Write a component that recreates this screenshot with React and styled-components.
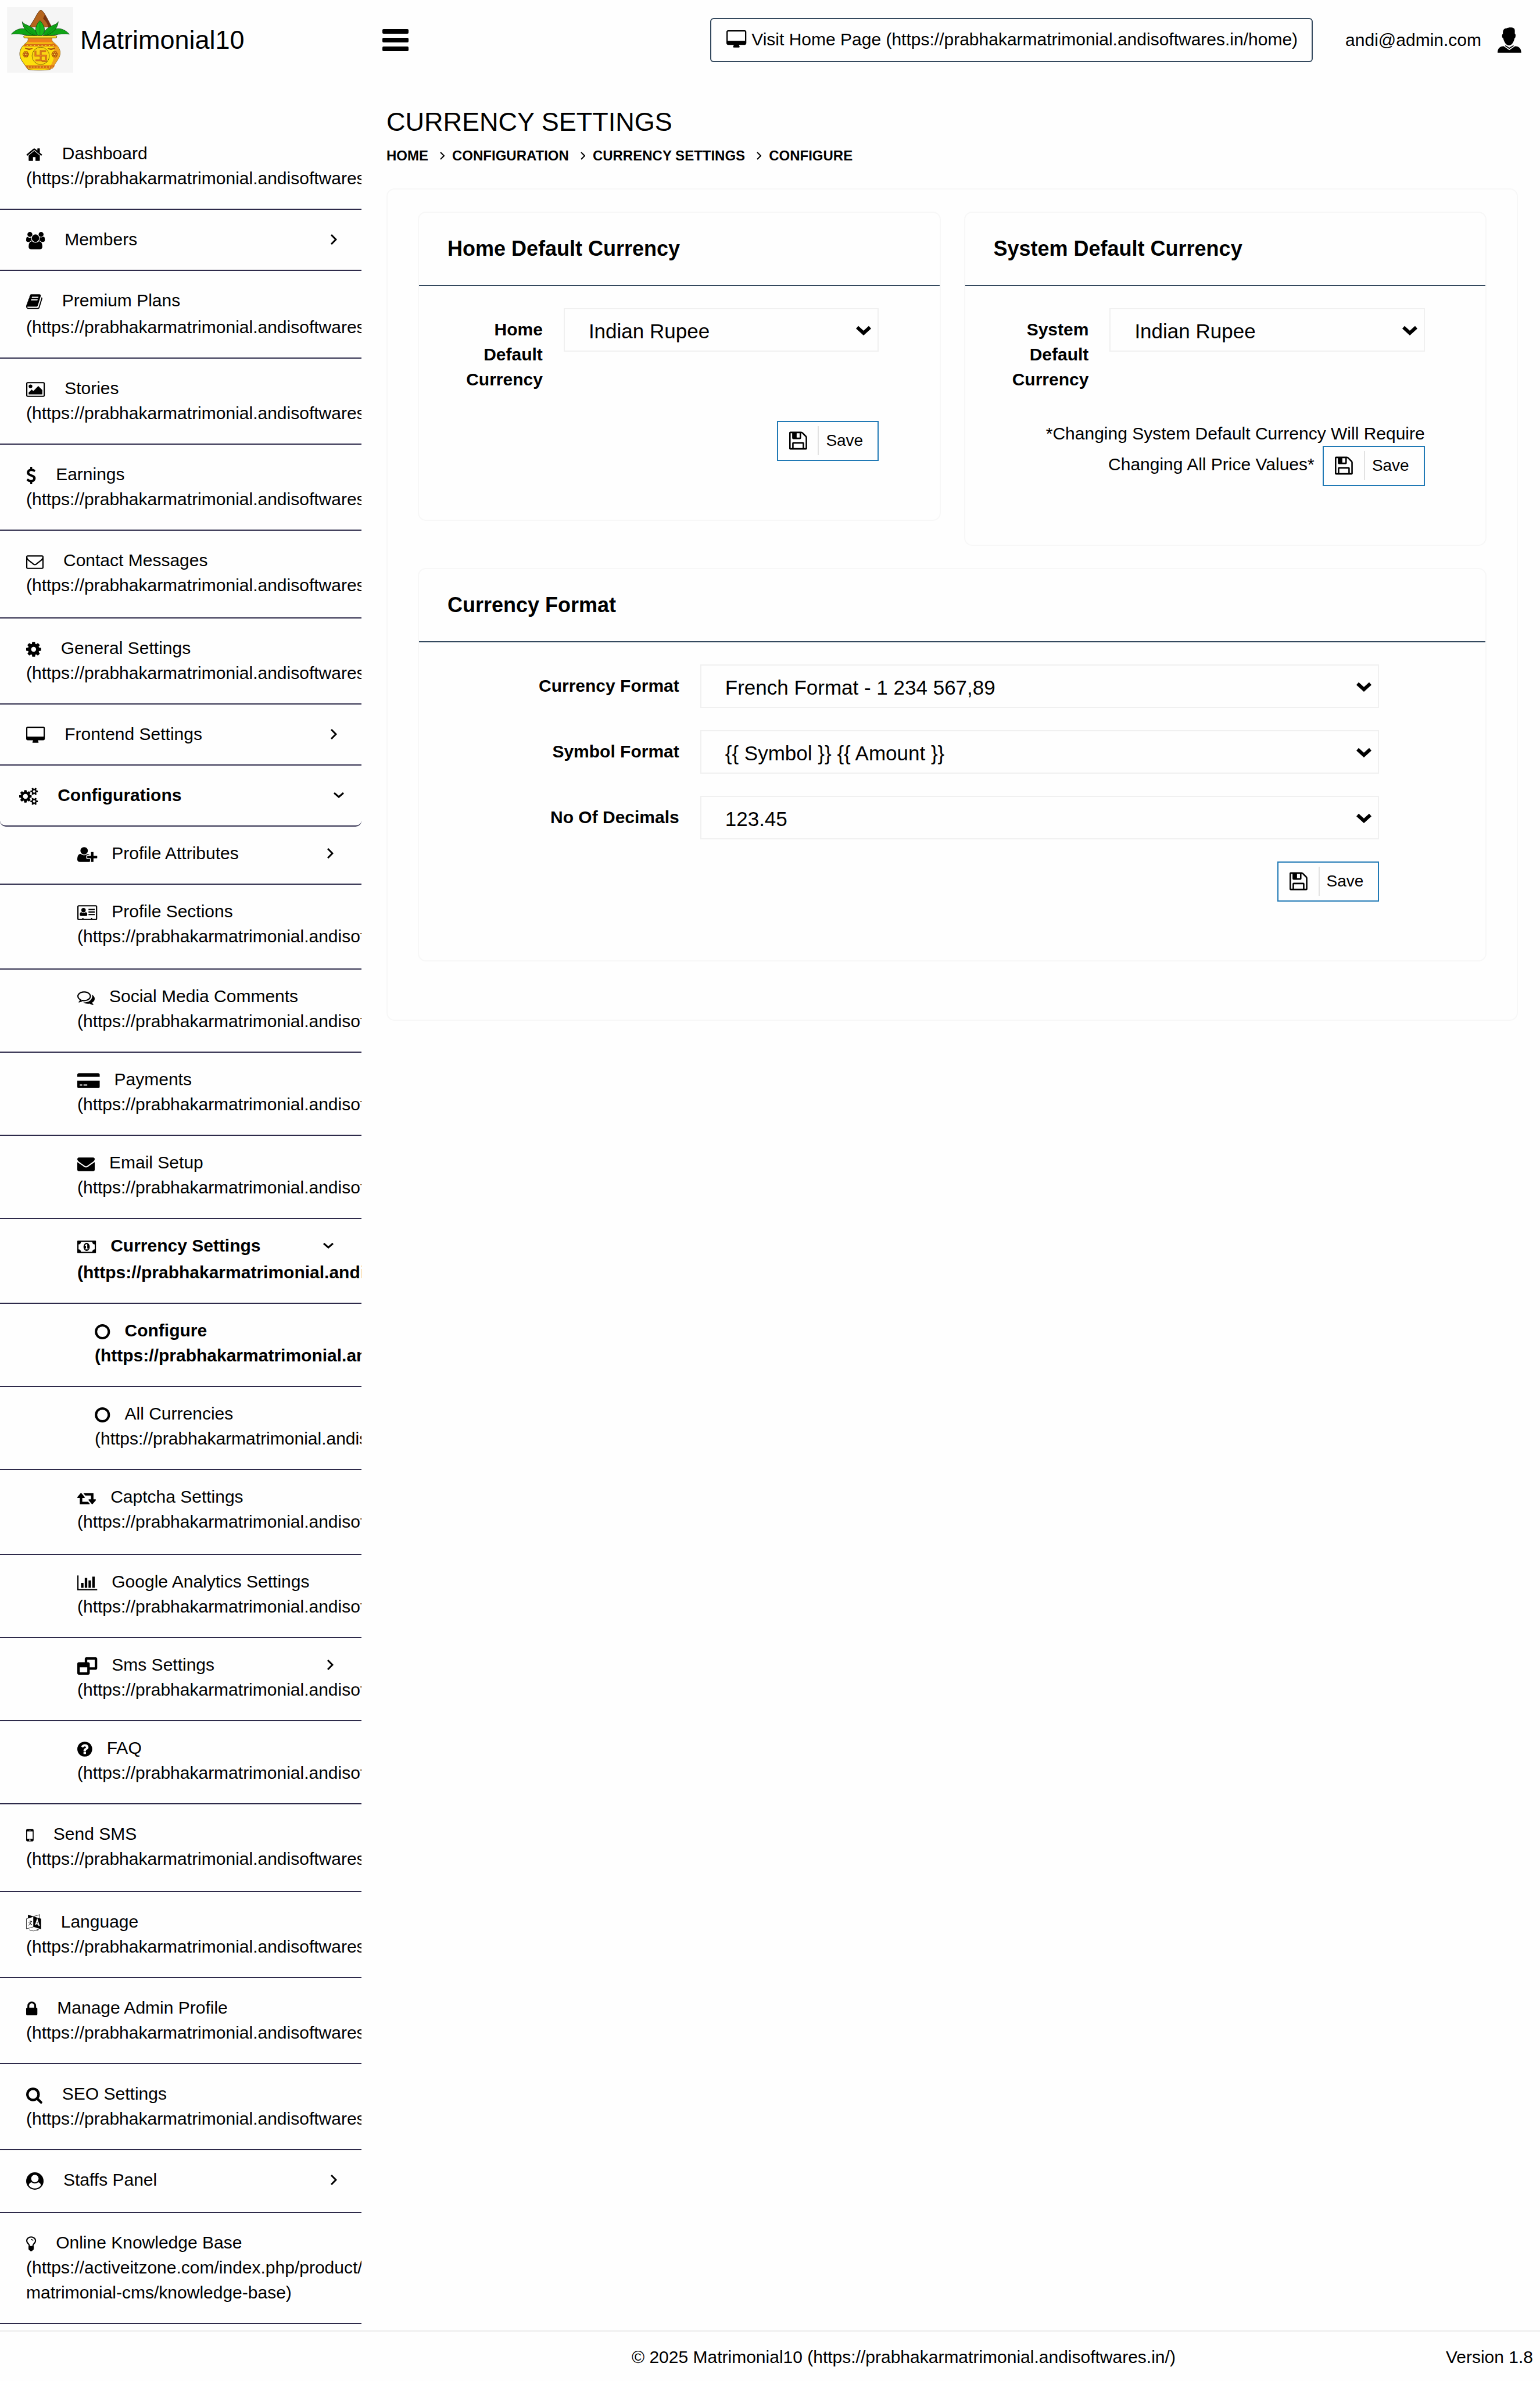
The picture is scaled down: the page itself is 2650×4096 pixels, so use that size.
import React from "react";
import styled, { createGlobalStyle, css } from "styled-components";

const INK = "#000";
const RULE = "#2d2a4a";
const SLATE = "#34495e";
const BLUE = "#2079b5";
const PAPER = "#fefefe";
const SITE = "https://prabhakarmatrimonial.andisoftwares.in/";

const GlobalStyle = createGlobalStyle`
  *, *::before, *::after { box-sizing: border-box; }
  body {
    margin: 0;
    background: ${PAPER};
    color: ${INK};
    font-family: "Liberation Sans", Arial, sans-serif;
    font-size: 30px;
    line-height: 43px;
  }
  a { color: inherit; text-decoration: none; }
`;

/* ---------- icons: [x offset, width, shapes], all 1792 units high ---------- */

const ICONS = {
  home: [64, 1664, <path d="M1472 992v480q0 26-19 45t-45 19h-384v-384h-256v384h-384q-26 0-45-19t-19-45v-480q0-1 .5-3t.5-3l575-474 575 474q1 2 1 6zm223-69l-62 74q-8 9-21 11h-3q-13 0-21-7l-692-577-692 577q-12 8-24 7-13-2-21-11l-62-74q-8-10-7-23.5t11-21.5l719-599q32-26 76-26t76 26l244 204v-195q0-14 9-23t23-9h192q14 0 23 9t9 23v408l219 182q10 8 11 21.5t-7 23.5z" />],
  users: [0, 1920, <path d="M593 896q-162 5-265 128h-134q-82 0-138-40.5t-56-118.5q0-353 124-353 6 0 43.5 21t97.5 42.5 119 21.5q67 0 133-23-5 37-5 66 0 159 81 288zm1071 637q0 120-73 189.5t-194 69.5h-874q-121 0-194-69.5t-73-189.5q0-53 3.5-103.5t14-109 26.5-108.5 43-97.5 62-81 85.5-53.5 111.5-20q10 0 43 21.5t73 48 107 48 135 21.5 135-21.5 107-48 73-48 43-21.5q61 0 111.5 20t85.5 53.5 62 81 43 97.5 26.5 108.5 14 109 3.5 103.5zm-1024-1277q0 106-75 181t-181 75-181-75-75-181 75-181 181-75 181 75 75 181zm704 384q0 159-112.5 271.5t-271.5 112.5-271.5-112.5-112.5-271.5 112.5-271.5 271.5-112.5 271.5 112.5 112.5 271.5zm576 225q0 78-56 118.5t-138 40.5h-134q-103-123-265-128 81-129 81-288 0-29-5-66 66 23 133 23 59 0 119-21.5t97.5-42.5 43.5-21q124 0 124 353zm-128-609q0 106-75 181t-181 75-181-75-75-181 75-181 181-75 181 75 75 181z" />],
  book: [64, 1664, <path d="M1703 478q40 57 18 129l-275 906q-19 64-76.5 107.5t-122.5 43.5h-923q-77 0-148.5-53.5t-99.5-131.5q-24-67-2-127 0-4 3-27t4-37q1-8-3-21.5t-3-19.5q2-11 8-21t16.5-23.5 16.5-23.5q23-38 45-91.5t30-91.5q3-10 .5-30t-.5-28q3-11 17-28t17-23q21-36 42-92t25-90q1-9-2.5-32t.5-28q4-13 22-30.5t22-22.5q19-26 42.5-84.5t27.5-96.5q1-8-3-25.5t-2-26.5q2-8 9-18t18-23 17-21q8-12 16.5-30.5t15-35 16-36 19.5-32 26.5-23.5 36-11.5 47.5 5.5l-1 3q38-9 51-9h761q74 0 114 56t18 130l-274 906q-36 119-71.5 153.5t-128.5 34.5h-869q-27 0-38 15-11 16-1 43 24 70 144 70h923q29 0 56-15.5t35-41.5l300-987q7-22 5-57 38 15 59 43zm-1064 2q-4 13 2 22.5t20 9.5h608q13 0 25.5-9.5t16.5-22.5l21-64q4-13-2-22.5t-20-9.5h-608q-13 0-25.5 9.5t-16.5 22.5zm-83 256q-4 13 2 22.5t20 9.5h608q13 0 25.5-9.5t16.5-22.5l21-64q4-13-2-22.5t-20-9.5h-608q-13 0-25.5 9.5t-16.5 22.5z" />],
  picture: [-64, 1920, <path d="M576 576q0 80-56 136t-136 56-136-56-56-136 56-136 136-56 136 56 56 136zm1024 384v448h-1408v-192l320-320 160 160 512-512zm96-704h-1600q-13 0-22.5 9.5t-9.5 22.5v1216q0 13 9.5 22.5t22.5 9.5h1600q13 0 22.5-9.5t9.5-22.5v-1216q0-13-9.5-22.5t-22.5-9.5zm160 32v1216q0 66-47 113t-113 47h-1600q-66 0-113-47t-47-113v-1216q0-66 47-113t113-47h1600q66 0 113 47t47 113z" />],
  dollar: [384, 1024, <path d="M1362 1185q0 153-99.5 263.5t-258.5 136.5v175q0 14-9 23t-23 9h-135q-13 0-22.5-9.5t-9.5-22.5v-175q-66-9-127.5-31t-101.5-44.5-74-48-46.5-37.5-17.5-18q-17-21-2-41l103-135q7-10 23-12 15-2 24 9l2 2q113 99 243 125 37 8 74 8 81 0 142.5-43t61.5-122q0-28-15-53t-33.5-42-58.5-37.5-66-32-80-32.5q-39-16-61.5-25t-61.5-26.5-62.5-31-56.5-35.5-53.5-42.5-43.5-49-35.5-58-21-66.5-8.5-78q0-138 98-242t255-134v-180q0-13 9.5-22.5t22.5-9.5h135q14 0 23 9t9 23v176q57 6 110.5 23t87 33.5 63.5 37.5 39 29 15 14q17 18 5 38l-81 146q-8 15-23 16-14 3-27-7-3-3-14.5-12t-39-26.5-58.5-32-74.5-26-85.5-11.5q-95 0-155 43t-60 111q0 26 8.5 48t29.5 41.5 39.5 33 56 31 60.5 27 70 27.5q53 20 81 31.5t76 35 75.5 42.5 62 50 53 63.5 31.5 76.5 13 94z" />],
  mailOutline: [0, 1792, <path d="M1664 1504v-768q-32 36-69 66-268 206-426 338-51 43-83 67t-86.5 48.5-102.5 24.5h-2q-48 0-102.5-24.5t-86.5-48.5-83-67q-158-132-426-338-37-30-69-66v768q0 13 9.5 22.5t22.5 9.5h1472q13 0 22.5-9.5t9.5-22.5zm0-1051v-24.5l-.5-13-3-12.5-5.5-9-9-7.5-14-2.5h-1472q-13 0-22.5 9.5t-9.5 22.5q0 168 147 284 193 152 401 317 6 5 35 29.5t46 37.5 44.5 31.5 50.5 27.5 43 9h2q20 0 43-9t50.5-27.5 44.5-31.5 46-37.5 35-29.5q208-165 401-317 54-43 100.5-115.5t46.5-131.5zm128-37v1088q0 66-47 113t-113 47h-1472q-66 0-113-47t-47-113v-1088q0-66 47-113t113-47h1472q66 0 113 47t47 113z" />],
  gear: [128, 1536, <path d="M1152 896q0-106-75-181t-181-75-181 75-75 181 75 181 181 75 181-75 75-181zm512-109v222q0 12-8 23t-20 13l-185 28q-19 54-39 91 35 50 107 138 10 12 10 25t-9 23q-27 37-99 108t-94 71q-12 0-26-9l-138-108q-44 23-91 38-16 136-29 186-7 28-36 28h-222q-14 0-24.5-8.5t-11.5-21.5l-28-184q-49-16-90-37l-141 107q-10 9-25 9-14 0-25-11-126-114-165-168-7-10-7-23 0-12 8-23 15-21 51-66.5t54-70.5q-27-50-41-99l-183-27q-13-2-21-12.5t-8-23.5v-222q0-12 8-23t19-13l186-28q14-46 39-92-40-57-107-138-10-12-10-24 0-10 9-23 26-36 98.5-107.5t94.5-71.5q13 0 26 10l138 107q44-23 91-38 16-136 29-186 7-28 36-28h222q14 0 24.5 8.5t11.5 21.5l28 184q49 16 90 37l142-107q9-9 24-9 13 0 25 10 129 119 165 170 7 8 7 22 0 12-8 23-15 21-51 66.5t-54 70.5q26 50 41 98l183 28q13 2 21 12.5t8 23.5z" />],
  desktop: [-64, 1920, <path d="M1728 992v-832q0-13-9.5-22.5t-22.5-9.5h-1600q-13 0-22.5 9.5t-9.5 22.5v832q0 13 9.5 22.5t22.5 9.5h1600q13 0 22.5-9.5t9.5-22.5zm128-832v1088q0 66-47 113t-113 47h-544q0 37 16 77.5t32 71 16 43.5q0 26-19 45t-45 19h-512q-26 0-45-19t-19-45q0-14 16-44t32-70 16-78h-544q-66 0-113-47t-47-113v-1088q0-66 47-113t113-47h1600q66 0 113 47t47 113z" />],
  gears: [-64, 1920, <path d="M832 896q0-106-75-181t-181-75-181 75-75 181 75 181 181 75 181-75 75-181zm768 512q0-52-38-90t-90-38-90 38-38 90q0 53 37.5 90.5t90.5 37.5 90.5-37.5 37.5-90.5zm0-1024q0-52-38-90t-90-38-90 38-38 90q0 53 37.5 90.5t90.5 37.5 90.5-37.5 37.5-90.5zm-384 421v185q0 10-7 19.5t-16 10.5l-155 24q-11 35-32 76 34 48 90 115 7 11 7 20 0 12-7 19-23 30-82.5 89.5t-78.5 59.5q-11 0-21-7l-115-90q-37 19-77 31-11 108-23 155-7 24-30 24h-186q-11 0-20-7.5t-10-17.5l-23-153q-34-10-75-31l-118 89q-7 7-20 7-11 0-21-8-144-133-144-160 0-9 7-19 10-14 41-53t47-61q-23-44-35-82l-152-24q-10-1-17-9.5t-7-19.5v-185q0-10 7-19.5t16-10.5l155-24q11-35 32-76-34-48-90-115-7-11-7-20 0-12 7-20 22-30 82-89t79-59q11 0 21 7l115 90q34-18 77-32 11-108 23-154 7-24 30-24h186q11 0 20 7.5t10 17.5l23 153q34 10 75 31l118-89q8-7 20-7 11 0 21 8 144 133 144 160 0 8-7 19-12 16-42 54t-45 60q23 48 34 82l152 23q10 2 17 10.5t7 19.5zm640 533v140q0 16-149 31-12 27-30 52 51 113 51 138 0 4-4 7-122 71-124 71-8 0-46-47t-52-68q-20 2-30 2t-30-2q-14 21-52 68t-46 47q-2 0-124-71-4-3-4-7 0-25 51-138-18-25-30-52-149-15-149-31v-140q0-16 149-31 13-29 30-52-51-113-51-138 0-4 4-7 4-2 35-20t59-34 30-16q8 0 46 46.5t52 67.5q20-2 30-2t30 2q51-71 92-112l6-2q4 0 124 70 4 3 4 7 0 25-51 138 17 23 30 52 149 15 149 31zm0-1024v140q0 16-149 31-12 27-30 52 51 113 51 138 0 4-4 7-122 71-124 71-8 0-46-47t-52-68q-20 2-30 2t-30-2q-14 21-52 68t-46 47q-2 0-124-71-4-3-4-7 0-25 51-138-18-25-30-52-149-15-149-31v-140q0-16 149-31 13-29 30-52-51-113-51-138 0-4 4-7 4-2 35-20t59-34 30-16q8 0 46 46.5t52 67.5q20-2 30-2t30 2q51-71 92-112l6-2q4 0 124 70 4 3 4 7 0 25-51 138 17 23 30 52 149 15 149 31z" />],
  userPlus: [0, 2048, <path d="M704 896q-159 0-271.5-112.5T320 512t112.5-271.5T704 128t271.5 112.5T1088 512 975.5 783.500 704 896zm960 128h352q13 0 22.500 9.500t9.500 22.500v192q0 13-9.500 22.500t-22.500 9.500h-352v352q0 13-9.500 22.500t-22.500 9.500h-192q-13 0-22.500-9.500t-9.500-22.500v-352h-352q-13 0-22.500-9.500t-9.500-22.500v-192q0-13 9.500-22.500t22.500-9.500h352v-352q0-13 9.500-22.500t22.500-9.500h192q13 0 22.500 9.500t9.500 22.500v352zm-736 224q0 52 38 90t90 38h256v238q-68 50-171 50h-874q-121 0-194-69t-73-190q0-53 3.500-103.500t14-109 26.500-108.500 43-97.500 62-81 85.500-53.500 111.500-20q19 0 39 17 79 61 154.500 91.500t164.500 30.500 164.500-30.500 154.500-91.500q20-17 39-17 132 0 217 96h-223q-52 0-90 38t-38 90v192z" />],
  idCard: [0, 2048, <><path fillRule="evenodd" d="M160 128h1728q160 0 160 160v1216q0 160-160 160H160q-160 0-160-160V288q0-160 160-160zm-32 160v1216q0 32 32 32h352v-64q0-32 32-32h64q32 0 32 32v64h768v-64q0-32 32-32h64q32 0 32 32v64h352q32 0 32-32V288q0-32-32-32H160q-32 0-32 32z" /><circle cx="640" cy="640" r="225" /><path d="M256 1090c0-160 60-240 170-240 120 100 310 100 430 0 110 0 170 80 170 240 0 110-60 150-130 150H390c-80 0-134-50-134-150zM1152 1024h640v128h-640zM1152 768h640v128h-640zM1152 512h640v128h-640z" /></>],
  comments: [0, 1792, <path d="M704 384q-153 0-286 52t-211.5 141-78.5 191q0 82 53 158t149 132l97 56-35 84q34-20 62-39l44-31 53 10q78 14 153 14 153 0 286-52t211.500-141 78.500-191-78.500-191-211.500-141-286-52zm0-128q191 0 353.500 68.500t256.500 186.500 94 257-94 257-256.500 186.500-353.500 68.500q-86 0-176-16-124 88-278 128-36 9-86 16h-3q-11 0-20.500-8t-11.500-21q-1-3-1-6.500t.5-6.500 2-6l2.500-5 3.500-5.500 4-5 4.500-5 4-4.500q5-6 23-25t26-29.500 22.500-29 25-38.500 20.500-44q-124-72-195-177t-71-224q0-139 94-257t256.500-186.500 353.500-68.500zm822 1169q10 24 20.500 44t25 38.500 22.500 29 26 29.500 23 25q1 1 4 4.500t4.500 5 4 5 3.500 5.500l2.500 5 2 6 .5 6.500-1 6.500q-3 14-13 22t-22 7q-50-7-86-16-154-40-278-128-90 16-176 16-271 0-472-132 58 4 88 4 161 0 309-45t264-129q125-92 192-212t67-254q0-77-23-152 129 71 204 178t75 230q0 120-71 224.500t-195 176.500z" />],
  creditCard: [0, 2304, <path fillRule="evenodd" d="M0 512V288q0-160 160-160h1984q160 0 160 160v224zM0 896h2304v608q0 160-160 160H160q-160 0-160-160zm256 384v128h256v-128zm384 0v128h384v-128z" />],
  mail: [0, 1792, <path d="M1792 710v794q0 66-47 113t-113 47h-1472q-66 0-113-47t-47-113v-794q44 49 101 87 362 246 497 345 57 42 92.500 65.500t94.500 48 110 24.500h2q51 0 110-24.500t94.500-48 92.500-65.500q170-123 498-345 57-39 100-87zm0-294q0 79-49 151t-122 123q-376 261-468 325-10 7-42.500 31t-54 38.500-52 32.500-57.500 27-50 9h-2q-23 0-50-9t-57.500-27-52-32.500-54-38.500-42.500-31q-91-64-262-182.500t-205-142.500q-62-42-117-115.500t-55-136.500q0-78 41.500-130t118.500-52h1472q65 0 112.500 47t47.500 113z" />],
  money: [0, 1920, <path d="M768 1152h384v-96h-128v-448h-114l-148 137 77 80q42-37 55-57h2v288h-128v96zm512-256q0 70-21 142t-59.500 134-101.500 101-138 39-138-39-101.500-101-59.500-134-21-142 21-142 59.500-134 101.500-101 138-39 138 39 101.500 101 59.500 134 21 142zm512 256v-512q-106 0-181-75t-75-181h-1152q0 106-75 181t-181 75v512q106 0 181 75t75 181h1152q0-106 75-181t181-75zm128-832v1152q0 26-19 45t-45 19h-1792q-26 0-45-19t-19-45v-1152q0-26 19-45t45-19h1792q26 0 45 19t19 45z" />],
  circle: [0, 1584, <circle cx="792" cy="896" r="660" fill="none" stroke="currentColor" strokeWidth="240" />],
  retweet: [0, 1920, <path d="M1280 1504q0 13-9.500 22.500t-22.500 9.500h-960q-8 0-13.500-2t-9-7-5.500-8-3-11.500-1-11.500v-600h-192q-26 0-45-19t-19-45q0-24 15-41l320-384q19-22 49-22t49 22l320 384q15 17 15 41 0 26-19 45t-45 19h-192v384h576q16 0 25 11l160 192q7 10 7 21zm640-416q0 24-15 41l-320 384q-20 23-49 23t-49-23l-320-384q-15-17-15-41 0-26 19-45t45-19h192v-384h-576q-16 0-25-12l-160-192q-7-9-7-20 0-13 9.500-22.500t22.500-9.500h960q8 0 13.500 2t9 7 5.500 8 3 11.500 1 11.500v600h192q26 0 45 19t19 45z" />],
  chart: [0, 2048, <path d="M640 896v512h-256v-512h256zm384-512v1024h-256v-1024h256zm1024 1152v128h-2048v-1536h128v1408h1920zm-640-896v768h-256v-768h256zm384-384v1152h-256v-1152h256z" />],
  windows: [0, 2048, <path d="M256 1536h768v-512H256v512zm1024-512h512V256h-768v256h96q66 0 113 47t47 113v352zm768-864v960q0 66-47 113t-113 47h-608v352q0 66-47 113t-113 47H160q-66 0-113-47T0 1632V672q0-66 47-113t113-47h608V160q0-66 47-113T928 0h960q66 0 113 47t47 113z" />],
  question: [128, 1536, <path d="M1024 1376v-192q0-14-9-23t-23-9h-192q-14 0-23 9t-9 23v192q0 14 9 23t23 9h192q14 0 23-9t9-23zm256-672q0-88-55.500-163t-138.500-116-170-41q-243 0-371 213-15 24 8 42l132 100q7 6 19 6 16 0 25-12 53-68 86-92 34-24 86-24 48 0 85.500 26t37.500 59q0 38-20 61t-68 45q-63 28-115.500 86.500t-52.500 125.500v36q0 14 9 23t23 9h192q14 0 23-9t9-23q0-19 21.500-49.500t54.500-49.500q32-18 49-28.500t46-35 44.500-48 28-60.500 12.500-81zm384 192q0 209-103 385.500t-279.500 279.500-385.500 103-385.500-103-279.500-279.500-103-385.500 103-385.500 279.500-279.500 385.500-103 385.500 103 279.500 279.500 103 385.500z" />],
  mobile: [512, 768, <path d="M976 1408q0-33-23.500-56.500t-56.500-23.500-56.500 23.500-23.500 56.500 23.500 56.500 56.500 23.500 56.500-23.500 23.500-56.500zm208-160v-704q0-13-9.500-22.500t-22.500-9.500h-512q-13 0-22.500 9.500t-9.500 22.500v704q0 13 9.500 22.500t22.500 9.500h512q13 0 22.500-9.500t9.500-22.500zm-192-848q0-16-16-16h-160q-16 0-16 16t16 16h160q16 0 16-16zm288-16v1024q0 52-38 90t-90 38h-512q-52 0-90-38t-38-90v-1024q0-52 38-90t90-38h512q52 0 90 38t38 90z" />],
  language: [0, 1536, <g transform="scale(46.5)"><path d="M4 1 16.500 5 4 9.200zM16.300 5 33 10v23l-16.700-5z" /><path d="M.6 10 16.300 5v23L.6 32.400zM16.300 5 30 1v7.800" fill="none" stroke="currentColor" strokeWidth="1" /><path d="M8 13.500l1.800 1.500M5 18l8-2.500M11.500 16q-2 6-6.500 9M7 19.500q3 3 6 3.500" fill="none" stroke="currentColor" strokeWidth="1.200" /><path d="M20.800 23.500 24.500 12.500 28.800 26M22 20.500l5 1.500" fill="none" stroke={PAPER} strokeWidth="2.400" /><path d="M7 34.500q9 5 19-.3M23.500 33.500l4-.5-1.500 3z" fill="none" stroke="currentColor" strokeWidth="1" /></g>],
  lock: [320, 1152, <path d="M640 768h512v-192q0-106-75-181t-181-75-181 75-75 181v192zm832 96v576q0 40-28 68t-68 28h-960q-40 0-68-28t-28-68v-576q0-40 28-68t68-28h32v-192q0-184 132-316t316-132 316 132 132 316v192h32q40 0 68 28t28 68z" />],
  search: [64, 1664, <path d="M1216 832q0-185-131.500-316.500t-316.500-131.500-316.500 131.500-131.500 316.500 131.500 316.500 316.500 131.500 316.500-131.500 131.500-316.500zm512 832q0 52-38 90t-90 38q-54 0-90-38l-343-342q-179 124-399 124-143 0-273.500-55.500t-225-150-150-225-55.500-273.500 55.500-273.500 150-225 225-150 273.500-55.500 273.500 55.500 225 150 150 225 55.500 273.500q0 220-124 399l343 343q37 37 37 90z" />],
  userCircle: [0, 1792, <><circle cx="896" cy="896" r="832" fill="none" stroke="currentColor" strokeWidth="128" /><path fillRule="evenodd" d="M896 64a832 832 0 0 1 650 1350c-50-260-140-390-325-390a490 490 0 0 1-650 0c-185 0-275 130-325 390A832 832 0 0 1 896 64zm0 192a384 384 0 1 0 0 768 384 384 0 1 0 0-768z" /></>],
  bulb: [384, 1024, <path d="M1120 576q0 13-9.500 22.500t-22.500 9.500-22.500-9.500-9.500-22.500q0-46-54-71t-106-25q-13 0-22.500-9.500t-9.500-22.500 9.500-22.500 22.500-9.500q50 0 99.500 16t87 54 37.500 90zm160 0q0-72-34.500-134t-90-101.500-123-62-136.500-22.500-136.500 22.500-123 62-90 101.500-34.500 134q0 101 68 180 10 11 30.500 33t30.500 33q128 153 141 298h228q13-145 141-298 10-11 30.500-33t30.500-33q68-79 68-180zm128 0q0 155-103 268-45 49-74.500 87t-59.500 95.500-34 107.500q47 28 47 82 0 37-25 64 25 27 25 64 0 52-45 81 13 23 13 47 0 46-31.500 71t-77.500 25q-20 44-60 70t-87 26-87-26-60-70q-46 0-77.500-25t-31.500-71q0-24 13-47-45-29-45-81 0-37 25-64-25-27-25-64 0-54 47-82-4-50-34-107.500t-59.500-95.500-74.500-87q-103-113-103-268 0-99 44.500-184.500t117-142 164-89 186.500-32.500 186.500 32.500 164 89 117 142 44.500 184.500z" />],
  floppy: [128, 1536, <path d="M512 1536h768v-384h-768v384zm896 0h128v-896q0-14-10-38.500t-20-34.500l-281-281q-10-10-34-20t-39-10v416q0 40-28 68t-68 28h-576q-40 0-68-28t-28-68v-416h-128v1280h128v-416q0-40 28-68t68-28h832q40 0 68 28t28 68v416zm-384-928v-320q0-13-9.500-22.500t-22.500-9.500h-192q-13 0-22.500 9.500t-9.500 22.500v320q0 13 9.500 22.500t22.500 9.500h192q13 0 22.500-9.500t9.500-22.500zm640 32v928q0 40-28 68t-68 28h-1344q-40 0-68-28t-28-68v-1344q0-40 28-68t68-28h928q40 0 88 20t76 48l280 280q28 28 48 76t20 88z" />],
};

const Glyph = styled.svg`
  display: block;
  flex: none;
  height: ${(p) => p.$size}px;
  fill: currentColor;
  overflow: visible;
`;

function Icon({ name, size = 30 }) {
  const [x, width, shapes] = ICONS[name];
  return (
    <Glyph $size={size} viewBox={`${x} 0 ${width} 1792`} aria-hidden="true">
      {shapes}
    </Glyph>
  );
}

const LogoArt = styled.svg`
  display: block;
  width: 114px;
  height: 113px;
`;

function Logo() {
  const gold = "#f0a11c";
  const beads = (y, xs) => xs.map((x) => <circle key={x} cx={x} cy={y} r="5" fill="#ffe14a" stroke="#b8580c" strokeWidth="2" />);
  const flower = (cx, cy) => (
    <g fill="#f29a1a" stroke="#a34c0a" strokeWidth="4">
      {[0, 60, 120, 180, 240, 300].map((a) => (
        <circle key={a} cx={cx + 12 * Math.cos((a * Math.PI) / 180)} cy={cy + 12 * Math.sin((a * Math.PI) / 180)} r="7" />
      ))}
      <circle cx={cx} cy={cy} r="7" fill="#ffe14a" />
    </g>
  );
  return (
    <LogoArt viewBox="0 0 426 423" role="img" aria-label="Matrimonial10 logo">
      <rect width="426" height="423" fill="#f5f5f5" />
      <path d="M217 20c-14 4-27 35-45 65l-28 44h144c-20-35-52-108-71-109z" fill="#b5651d" stroke="#4a220a" strokeWidth="3" />
      <path d="M232 75c18 15 28 33 34 54h22c-14-22-30-54-44-80z" fill="#7a3510" />
      <g fill="#0fa515" stroke="#0a4a10" strokeWidth="3">
        <path d="M27 175c30-32 66-44 100-30 20 10 42 24 54 42-45 3-80-20-154-12z" />
        <path d="M401 175c-30-32-66-44-100-30-20 10-42 24-54 42 45 3 80-20 154-12z" />
        <path d="M98 95c10 22 62 24 86 60 8 12 10 22 10 32-50-8-92-44-96-92z" />
        <path d="M330 95c-10 22-62 24-86 60-8 12-10 22-10 32 50-8 92-44 96-92z" />
        <path d="M212 88c-20 20-30 44-27 66 2 14 10 26 18 33h18c10-8 18-20 20-34 2-22-9-45-29-65z" fill="#19b81d" />
      </g>
      <path d="M212 96v90M110 112c20 30 50 55 78 72M318 112c-20 30-50 55-78 72" fill="none" stroke="#0a6a10" strokeWidth="2" />
      <path d="M134 201c6 14-4 24-18 36-40 32-42 76-20 110l38 54c6 8 136 8 146 0 20-18 34-42 50-66 22-36 14-70-20-98-14-12-26-22-20-36z" fill="#fddf0c" stroke="#5a3a08" strokeWidth="3" />
      <path d="M258 405c8-1 18-2 22-4 20-18 34-42 50-66 22-36 14-70-20-98l-22-18c24 70 26 130-30 186z" fill={gold} />
      <path d="M134 203h156c-4 10-2 18 6 26H128c8-8 10-16 6-26z" fill="#ee7f1b" />
      <path d="M120 236h184l18 18H104zM116 376h194l-16 20H132z" fill="#d96b16" />
      {beads(249, [130, 154, 178, 202, 226, 250, 274, 298])}
      {beads(387, [138, 156, 174, 194, 214, 234, 254, 274, 290])}
      <rect x="107" y="185" width="214" height="14" rx="7" fill="#ffe22e" stroke="#5a3a08" strokeWidth="3" />
      {flower(121, 305)}
      {flower(307, 305)}
      <path d="M116 266l26 10 22-8-22 2zM310 266l-26 10-22-8 22 2z" fill="#e9871b" stroke="#a34c0a" strokeWidth="4" />
      <circle cx="217" cy="315" r="56" fill="#fbd313" stroke="#6a5208" strokeWidth="3" />
      <path d="M183 282v32h68v32h-28M251 284h-34v60h-34" fill="none" stroke="#b3530c" strokeWidth="11" />
      <path d="M183 282v32h68v32h-28M251 284h-34v60h-34" fill="none" stroke="#f08a24" strokeWidth="5" />
    </LogoArt>
  );
}

const PersonArt = styled.svg`
  display: block;
  width: 41px;
  height: 44px;
`;

function Person() {
  return (
    <PersonArt viewBox="0 0 155 165" aria-hidden="true">
      <path d="M35 42C32 18 42 6 58 6 70-1 96-2 106 6c8 5 6 20 6 34 6 2 6 14 4 22-1 6-4 8-6 9-4 26-20 46-36 46S42 97 37 71c-5-2-8-8-8-15s2-12 6-14z" />
      <path d="M0 165c0-28 14-43 40-43l36 26 38-26c26 0 40 15 40 43z" />
      <path d="M45 113l5 13 26 20 28-20 5-13-33 19z" fill={PAPER} />
      <path d="M51 116l25 16 27-16 2 5-29 19-27-19z" />
    </PersonArt>
  );
}

/* ---------- page shell ---------- */

const Page = styled.div`
  display: flex;
  flex-direction: column;
  min-height: 100vh;
`;

const Header = styled.header`
  display: flex;
  align-items: center;
  height: 137px;
  padding: 0 32px 0 12px;
`;

const Brand = styled.a`
  display: flex;
  align-items: center;
  gap: 12px;
  width: 646px;
  font-size: 45px;
`;

const MenuButton = styled.button`
  display: flex;
  flex-direction: column;
  gap: 7px;
  width: 45px;
  padding: 0;
  border: 0;
  background: none;
`;

const MenuBar = styled.span`
  height: 8px;
  border-radius: 2px;
  background: ${INK};
`;

const Account = styled.div`
  display: flex;
  align-items: center;
  gap: 28px;
  margin-left: auto;
`;

const VisitLink = styled.a`
  display: flex;
  align-items: center;
  gap: 9px;
  height: 76px;
  margin-right: 28px;
  padding: 0 24px 2px 26px;
  border: 2px solid ${SLATE};
  border-radius: 6px;
`;

const Columns = styled.div`
  display: flex;
  flex: 1;
`;

/* ---------- sidebar ---------- */

const Sidebar = styled.nav`
  flex: none;
  width: 622px;
  padding: 76px 0 11px;
`;

const NavList = styled.ul`
  margin: 0;
  padding: 0;
  list-style: none;
`;

const indents = {
  top: css`padding: 29px 42px 31px 45px;`,
  open: css`padding: 29px 30px 31px 33px; border-radius: 0 0 10px 10px;`,
  sub: css`padding: 24px 48px 31px 133px;`,
  leaf: css`padding: 24px 48px 31px 163px;`,
};

const NavLink = styled.a`
  display: block;
  overflow: hidden;
  border-bottom: 2px solid ${RULE};
  font-weight: ${(p) => (p.$bold ? 700 : 400)};
  ${(p) => indents[p.$level]}
  ${(p) => p.$roomy && css`padding-bottom: 34px;`}
`;

const NavLine = styled.span`
  display: flex;
  align-items: center;
  gap: ${(p) => (p.$level === "top" || p.$level === "open" ? 34 : 25)}px;
  height: ${(p) => (p.$tall ? 46 : 43)}px;
  padding-bottom: ${(p) => (p.$tall ? 3 : 0)}px;
  white-space: nowrap;

  ${Glyph} { margin-top: 5px; }
`;

const NavUrl = styled.span`
  display: block;
  white-space: nowrap;
`;

const Arrow = styled.svg`
  flex: none;
  width: ${(p) => (p.$down ? 18 : 11)}px;
  height: ${(p) => (p.$down ? 10 : 18)}px;
  margin-left: auto;
  fill: none;
  stroke: currentColor;
  stroke-width: 3;
`;

function Chevron({ down }) {
  return down ? (
    <Arrow $down viewBox="0 0 18 10" aria-hidden="true"><path d="M1 1l8 7 8-7" /></Arrow>
  ) : (
    <Arrow viewBox="0 0 11 18" aria-hidden="true"><path d="M1 1l8 8-8 8" /></Arrow>
  );
}

const url = (path) => [`(${SITE}${path})`];

const NAV = [
  { icon: "home", label: "Dashboard", url: url("admin") },
  { icon: "users", label: "Members", arrow: "right" },
  { icon: "book", label: "Premium Plans", url: url("admin/packages"), tall: true },
  { icon: "picture", label: "Stories", url: url("admin/stories") },
  { icon: "dollar", label: "Earnings", url: url("admin/earnings") },
  { icon: "mailOutline", label: "Contact Messages", url: url("admin/contact_messages"), roomy: true },
  { icon: "gear", label: "General Settings", url: url("admin/general_settings") },
  { icon: "desktop", label: "Frontend Settings", arrow: "right" },
  { icon: "gears", label: "Configurations", arrow: "down", level: "open", bold: true },
  { icon: "userPlus", label: "Profile Attributes", arrow: "right", level: "sub" },
  { icon: "idCard", label: "Profile Sections", url: url("admin/profile_sections"), level: "sub", roomy: true },
  { icon: "comments", label: "Social Media Comments", url: url("admin/comments"), level: "sub" },
  { icon: "creditCard", label: "Payments", url: url("admin/payments"), level: "sub" },
  { icon: "mail", label: "Email Setup", url: url("admin/email_setup"), level: "sub" },
  { icon: "money", label: "Currency Settings", url: url("admin/currency"), level: "sub", arrow: "down", bold: true, tall: true },
  { icon: "circle", label: "Configure", url: url("admin/currency/configure"), level: "leaf", bold: true },
  { icon: "circle", label: "All Currencies", url: url("admin/currency/all"), level: "leaf" },
  { icon: "retweet", label: "Captcha Settings", url: url("admin/captcha"), level: "sub", roomy: true },
  { icon: "chart", label: "Google Analytics Settings", url: url("admin/analytics"), level: "sub" },
  { icon: "windows", label: "Sms Settings", url: url("admin/sms"), level: "sub", arrow: "right" },
  { icon: "question", label: "FAQ", url: url("admin/faq"), level: "sub" },
  { icon: "mobile", label: "Send SMS", url: url("admin/send_sms"), roomy: true },
  { icon: "language", label: "Language", url: url("admin/language") },
  { icon: "lock", label: "Manage Admin Profile", url: url("admin/profile") },
  { icon: "search", label: "SEO Settings", url: url("admin/seo") },
  { icon: "userCircle", label: "Staffs Panel", arrow: "right", roomy: true },
  { icon: "bulb", label: "Online Knowledge Base", url: ["(https://activeitzone.com/index.php/product/active-", "matrimonial-cms/knowledge-base)"] },
];

function NavItem({ icon, label, url: lines = [], level = "top", arrow, bold, tall, roomy }) {
  return (
    <li>
      <NavLink href="#" $level={level} $bold={bold} $roomy={roomy}>
        <NavLine $level={level} $tall={tall}>
          <Icon name={icon} />
          {label}
          {arrow && <Chevron down={arrow === "down"} />}
        </NavLine>
        {lines.map((line) => <NavUrl key={line}>{line}</NavUrl>)}
      </NavLink>
    </li>
  );
}

/* ---------- content ---------- */

const Main = styled.main`
  flex: 1;
  min-width: 0;
  padding: 47px 38px 0 43px;
`;

const Title = styled.h1`
  margin: 0;
  font-size: 45px;
  font-weight: 400;
  line-height: 52px;
  text-transform: uppercase;
`;

const Crumbs = styled.ol`
  display: flex;
  margin: 10px 0 35px;
  padding: 0;
  list-style: none;
  font-size: 24px;
  font-weight: 700;
  text-transform: uppercase;
`;

const Crumb = styled.li`
  display: flex;
  align-items: center;
`;

const CrumbArrow = styled.svg`
  width: 8px;
  height: 14px;
  margin: 0 13px 0 20px;
  fill: none;
  stroke: currentColor;
  stroke-width: 2;
`;

const Panel = styled.section`
  padding: 38px 52px 100px;
  border: 2px solid #f7f7f7;
  border-radius: 14px;
`;

const CardRow = styled.div`
  display: grid;
  grid-template-columns: 1fr 1fr;
  align-items: start;
  gap: 40px;
`;

const Card = styled.section`
  border: 2px solid #f7f7f7;
  border-radius: 14px;

  ${CardRow} + & { margin-top: 38px; }
`;

const CardTitle = styled.h2`
  margin: 0;
  padding: 0 49px;
  border-bottom: 2px solid ${SLATE};
  font-size: 36px;
  line-height: 124px;
`;

const Form = styled.form`
  display: grid;
  grid-template-columns: 3fr 8fr 1fr;
  row-gap: 38px;
  padding: 38px 14px 101px;
`;

const Label = styled.label`
  padding: 15px 18px 12px;
  font-weight: 700;
  text-align: right;
`;

const SelectBox = styled.div`
  position: relative;
  align-self: start;
  margin: 0 18px;
`;

const Select = styled.select`
  display: block;
  width: 100%;
  height: 75px;
  padding: 3px 60px 0 41px;
  border: 2px solid #f0f0f0;
  border-radius: 0;
  background: ${PAPER};
  color: ${INK};
  font: inherit;
  font-size: 35px;
  appearance: none;
`;

const SelectMark = styled.svg`
  position: absolute;
  top: 30px;
  right: 13px;
  width: 26px;
  height: 17px;
  fill: none;
  stroke: ${INK};
  stroke-width: 6;
  pointer-events: none;
`;

const Actions = styled.div`
  grid-column: 1 / 3;
  padding: 0 18px;
  text-align: right;
`;

const SaveButton = styled.button`
  display: inline-flex;
  align-items: center;
  height: 69px;
  padding: 0 25px 2px 19px;
  border: 2px solid ${BLUE};
  background: ${PAPER};
  color: ${INK};
  font: inherit;
  font-size: 28px;
  vertical-align: middle;
`;

const SaveDivider = styled.span`
  width: 2px;
  height: 50px;
  margin: 0 12px 0 19px;
  background: #e2e2e2;
`;

const Note = styled.span`
  margin-right: 6px;
`;

function Field({ id, label, value }) {
  return (
    <>
      <Label htmlFor={id}>{label}</Label>
      <SelectBox>
        <Select id={id} defaultValue={value}>
          <option>{value}</option>
        </Select>
        <SelectMark viewBox="0 0 26 17" aria-hidden="true"><path d="M2 3l11 10 11-10" /></SelectMark>
      </SelectBox>
      <span />
    </>
  );
}

function Save({ note }) {
  return (
    <Actions>
      {note && <Note>{note} </Note>}
      <SaveButton type="button">
        <Icon name="floppy" size={36} />
        <SaveDivider />
        Save
      </SaveButton>
    </Actions>
  );
}

const Footer = styled.footer`
  display: flex;
  align-items: center;
  height: 89px;
  padding: 0 12px 0 622px;
  border-top: 2px solid #ebebeb;
`;

const Copyright = styled.p`
  flex: 1;
  margin: 0;
  text-align: center;
`;

const CRUMBS = ["Home", "Configuration", "Currency Settings", "Configure"];

export default function App() {
  return (
    <Page>
      <GlobalStyle />
      <Header>
        <Brand href="#"><Logo />Matrimonial10</Brand>
        <MenuButton type="button" aria-label="Toggle menu">
          <MenuBar /><MenuBar /><MenuBar />
        </MenuButton>
        <Account>
          <VisitLink href="#">
            <Icon name="desktop" size={32} />
            Visit Home Page ({SITE}home)
          </VisitLink>
          andi@admin.com
          <Person />
        </Account>
      </Header>
      <Columns>
        <Sidebar>
          <NavList>
            {NAV.map((item) => <NavItem key={item.label} {...item} />)}
          </NavList>
        </Sidebar>
        <Main>
          <Title>Currency Settings</Title>
          <Crumbs>
            {CRUMBS.map((crumb, i) => (
              <Crumb key={crumb}>
                {i > 0 && <CrumbArrow viewBox="0 0 8 14" aria-hidden="true"><path d="M1 1l6 6-6 6" /></CrumbArrow>}
                <a href="#">{crumb}</a>
              </Crumb>
            ))}
          </Crumbs>
          <Panel>
            <CardRow>
              <Card>
                <CardTitle>Home Default Currency</CardTitle>
                <Form>
                  <Field id="home-currency" label="Home Default Currency" value="Indian Rupee" />
                  <Save />
                </Form>
              </Card>
              <Card>
                <CardTitle>System Default Currency</CardTitle>
                <Form>
                  <Field id="system-currency" label="System Default Currency" value="Indian Rupee" />
                  <Save note="*Changing System Default Currency Will Require Changing All Price Values*" />
                </Form>
              </Card>
            </CardRow>
            <Card>
              <CardTitle>Currency Format</CardTitle>
              <Form>
                <Field id="currency-format" label="Currency Format" value="French Format - 1 234 567,89" />
                <Field id="symbol-format" label="Symbol Format" value="{{ Symbol }} {{ Amount }}" />
                <Field id="decimals" label="No Of Decimals" value="123.45" />
                <Save />
              </Form>
            </Card>
          </Panel>
        </Main>
      </Columns>
      <Footer>
        <Copyright>© 2025 Matrimonial10 (<a href="#">{SITE}</a>)</Copyright>
        <span>Version 1.8</span>
      </Footer>
    </Page>
  );
}
